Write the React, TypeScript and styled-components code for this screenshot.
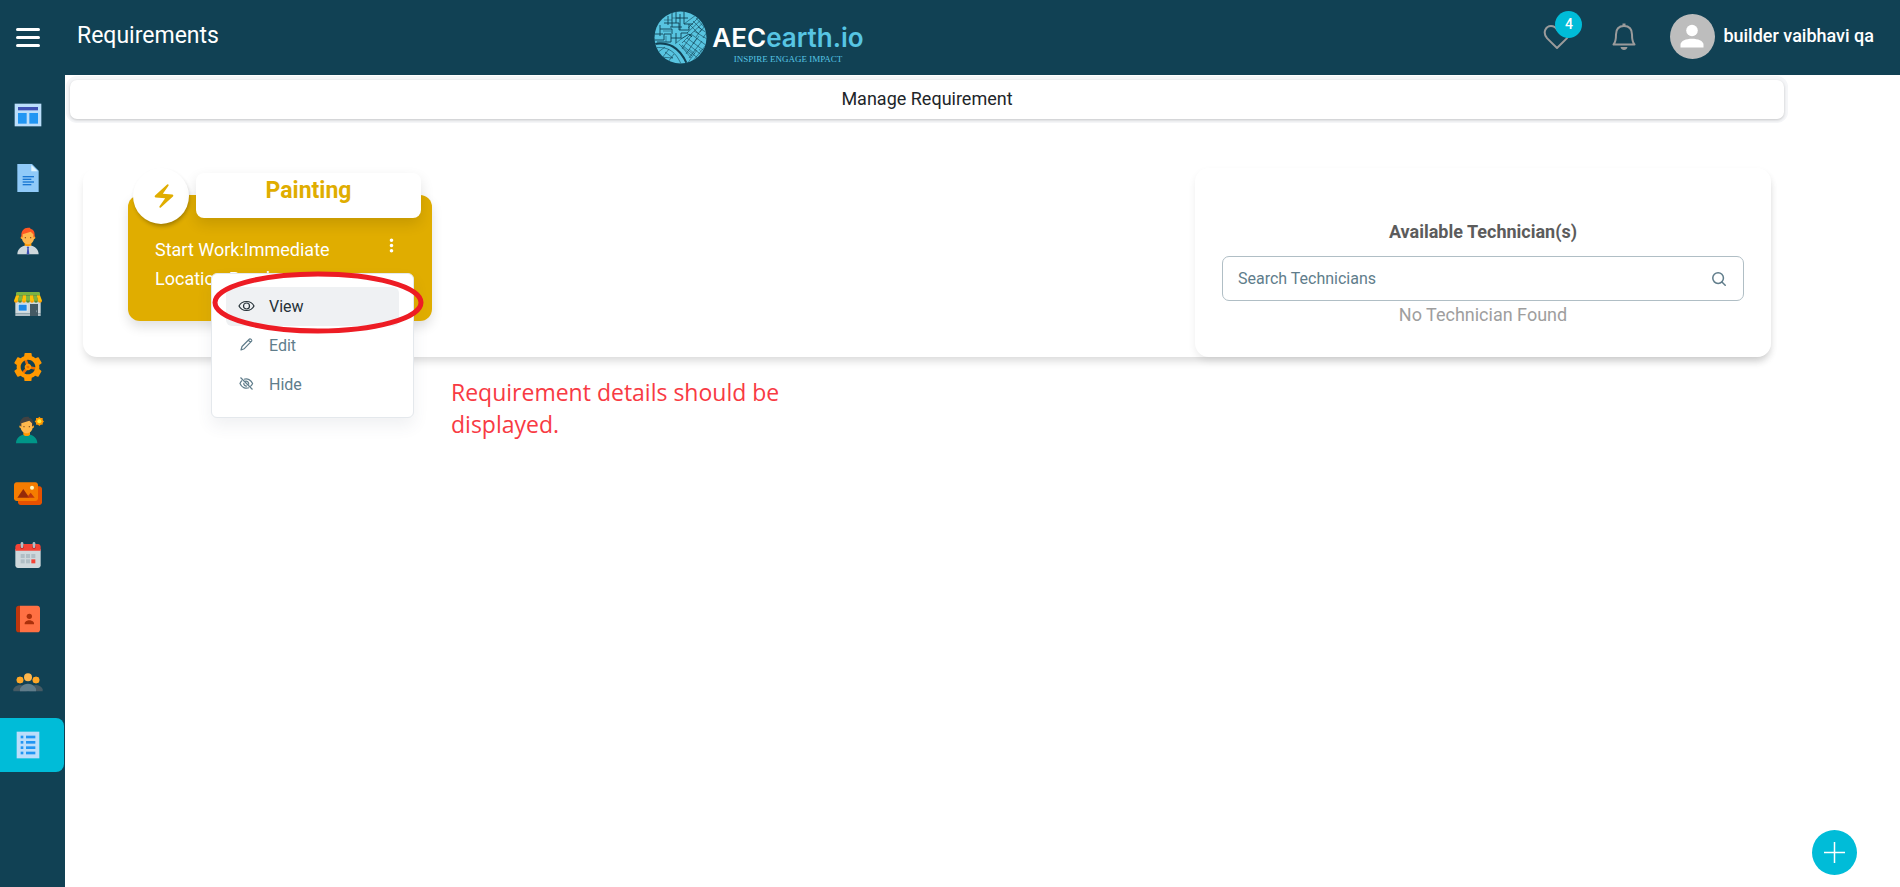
import React from 'react';
import styled, { createGlobalStyle } from 'styled-components';
import type { IconType } from 'react-icons';
import {
  FcTemplate, FcDocument, FcManager, FcShop, FcEngineering, FcPortraitMode,
  FcGallery, FcPlanner, FcContacts, FcConferenceCall, FcViewDetails,
} from 'react-icons/fc';
import { MdElectricBolt, MdMoreVert } from 'react-icons/md';

const navy = '#114154';
const teal = '#00bcd8';
const gold = '#e0ad00';
const slate = '#607d8b';

const GlobalStyle = createGlobalStyle`
  *, *::before, *::after { box-sizing: border-box; }
  body { margin: 0; background: #fff; color: #212529; font: 400 18px/24px Roboto, sans-serif; }
  button, input { font: inherit; color: inherit; }
  button { border: 0; padding: 0; background: none; cursor: pointer; }
  a { color: inherit; text-decoration: none; }
  h1, h2, h3, p, ul { margin: 0; padding: 0; }
  ul { list-style: none; }
`;

const Page = styled.div`
  min-height: 100vh;
  display: flex;
  flex-direction: column;
`;

const Header = styled.header`
  height: 75px;
  padding-bottom: 2px;
  background: ${navy};
  color: #fff;
  display: grid;
  grid-template-columns: 1fr auto 1fr;
  align-items: center;
`;

const HeaderStart = styled.div`
  display: flex;
  align-items: center;
  gap: 37px;
  padding: 0 0 2px 16px;
`;

const MenuButton = styled.button`
  display: flex;
  flex-direction: column;
  gap: 5px;
  padding: 3px 0 0;
`;

const MenuBar = styled.span`
  width: 24px;
  height: 3px;
  border-radius: 2px;
  background: #fff;
`;

const PageTitle = styled.h1`
  font-size: 23px;
  line-height: 32px;
  font-weight: 400;
`;

const Logo = styled.a`
  display: flex;
  align-items: center;
  gap: 5px;
  padding: 2px 382px 0 0;
`;

const LogoText = styled.span`
  display: flex;
  flex-direction: column;
  align-items: center;
  padding-top: 14px;
`;

const Wordmark = styled.span`
  font: 600 26px/28px Inter, sans-serif;
`;

const WordmarkAccent = styled.span`
  color: #57c5e4;
`;

const Tagline = styled.span`
  font: 400 9px/14px "Liberation Serif", serif;
  color: #57c5e4;
`;

const HeaderEnd = styled.div`
  display: flex;
  align-items: center;
  justify-content: flex-end;
  padding-right: 25px;
`;

const IconButton = styled.button<{ $gap: number }>`
  position: relative;
  display: flex;
  color: #9b9b9b;
  margin-right: ${(p) => p.$gap}px;
`;

const Badge = styled.span`
  position: absolute;
  left: 12px;
  top: -13px;
  width: 27px;
  height: 27px;
  border-radius: 50%;
  background: ${teal};
  color: #fff;
  font-size: 14px;
  line-height: 27px;
  font-weight: 500;
  text-align: center;
`;

const UserButton = styled.button`
  display: flex;
  align-items: center;
  gap: 8px;
  font-weight: 500;
`;

const UserName = styled.span`
  padding: 0 1px 2px 0;
`;

const Body = styled.div`
  flex: 1;
  display: flex;
`;

const Sidebar = styled.nav`
  width: 65px;
  flex: none;
  background: ${navy};
  padding: 13px 1px 0 0;
  display: flex;
  flex-direction: column;
  gap: 9px;
`;

const NavItem = styled.a<{ $active?: boolean }>`
  height: 54px;
  display: flex;
  align-items: center;
  padding-left: 12px;
  border-radius: 0 8px 8px 0;
  background: ${(p) => (p.$active ? teal : 'transparent')};
`;

const Main = styled.main`
  flex: 1;
  min-width: 0;
  padding: 5px 116px 0 5px;
`;

const Banner = styled.h2`
  height: 39px;
  border-radius: 7px;
  background: #fff;
  box-shadow: 0 1px 3px rgba(0, 0, 0, 0.2), 0 0 0 4px #f5f6f8;
  font-size: 18px;
  line-height: 38px;
  font-weight: 400;
  text-align: center;
`;

const Board = styled.section`
  margin: 49px 13px 0;
  height: 189px;
  display: flex;
  border-radius: 14px;
  background: #fff;
  box-shadow: 0 6px 8px -2px rgba(0, 0, 0, 0.15);
`;

const Requirements = styled.div`
  flex: 1;
  padding: 27px 45px 0;
`;

const Card = styled.article`
  position: relative;
  width: 304px;
  height: 126px;
  border-radius: 12px;
  background: ${gold};
  color: #fff;
  box-shadow: 0 6px 12px rgba(0, 0, 0, 0.12);
`;

const CardHead = styled.header`
  display: flex;
  align-items: center;
  gap: 7px;
  padding: 0 11px 0 5px;
  margin-bottom: 11px;
`;

const CardIcon = styled.span`
  width: 56px;
  height: 56px;
  margin-top: -27px;
  padding-left: 6px;
  display: flex;
  align-items: center;
  justify-content: center;
  border-radius: 50%;
  background: #fff;
  color: ${gold};
  box-shadow: 1px 3px 4px -1px rgba(0, 0, 0, 0.3);
`;

const CardTitle = styled.h3`
  flex: 1;
  height: 45px;
  margin-top: -28px;
  border-radius: 8px;
  background: #fff;
  color: ${gold};
  font-size: 23px;
  line-height: 35px;
  font-weight: 700;
  text-align: center;
  box-shadow: 0 6px 14px rgba(0, 0, 0, 0.12);
`;

const CardBody = styled.div`
  display: flex;
  justify-content: space-between;
  align-items: flex-start;
  padding: 0 30px 0 27px;
  line-height: 29px;
`;

const MoreButton = styled.button`
  display: flex;
  color: #fff;
`;

const Menu = styled.ul`
  position: absolute;
  z-index: 1;
  left: 83px;
  top: 78px;
  width: 203px;
  height: 145px;
  padding: 13px 14px;
  border: 1px solid #e4e8ec;
  border-radius: 6px;
  background: #fff;
  box-shadow: 0 8px 16px rgba(60, 80, 100, 0.08);
`;

const MenuItem = styled.button<{ $active?: boolean }>`
  width: 100%;
  height: 39px;
  padding-left: 12px;
  display: flex;
  align-items: center;
  gap: 14px;
  border-radius: 6px;
  font-size: 16px;
  color: ${(p) => (p.$active ? '#263238' : slate)};
  background: ${(p) => (p.$active ? '#eff1f3' : 'transparent')};
`;

const Highlight = styled.svg`
  position: absolute;
  z-index: 2;
  left: 84px;
  top: 76px;
  pointer-events: none;
`;

const Technicians = styled.aside`
  width: 576px;
  padding: 50px 27px 0;
  border-radius: 14px;
  background: #fff;
  text-align: center;
  box-shadow: 0 4px 8px -1px rgba(0, 0, 0, 0.09);
`;

const TechTitle = styled.h3`
  font-size: 18px;
  line-height: 28px;
  font-weight: 700;
  color: #5c5c5c;
  margin-bottom: 10px;
`;

const SearchBox = styled.label`
  height: 45px;
  padding: 0 16px 0 15px;
  display: flex;
  align-items: center;
  border: 1px solid #b0bec5;
  border-radius: 7px;
  color: ${slate};
`;

const SearchInput = styled.input`
  flex: 1;
  min-width: 0;
  border: 0;
  padding: 0;
  outline: 0;
  background: none;
  font-size: 16px;
  &::placeholder { color: ${slate}; opacity: 1; }
`;

const Empty = styled.p`
  line-height: 28px;
  color: #9e9e9e;
`;

const Note = styled.p`
  width: 360px;
  margin: 19px 0 0 381px;
  font: 400 23px/32px "Open Sans", sans-serif;
  color: #f83a43;
`;

const AddButton = styled.button`
  position: fixed;
  right: 43px;
  bottom: 12px;
  width: 45px;
  height: 45px;
  display: flex;
  align-items: center;
  justify-content: center;
  border-radius: 50%;
  background: ${teal};
`;

const navItems: { label: string; icon: IconType; active?: boolean }[] = [
  { label: 'Dashboard', icon: FcTemplate },
  { label: 'Documents', icon: FcDocument },
  { label: 'Manager', icon: FcManager },
  { label: 'Shop', icon: FcShop },
  { label: 'Services', icon: FcEngineering },
  { label: 'Profiles', icon: FcPortraitMode },
  { label: 'Gallery', icon: FcGallery },
  { label: 'Planner', icon: FcPlanner },
  { label: 'Contacts', icon: FcContacts },
  { label: 'Community', icon: FcConferenceCall },
  { label: 'Requirements', icon: FcViewDetails, active: true },
];

const LogoMark = () => (
  <svg width="53" height="53" viewBox="0 0 53 53" aria-hidden="true">
    <defs><clipPath id="globe"><circle cx="26.5" cy="26.5" r="26" /></clipPath></defs>
    <g clipPath="url(#globe)" fill="none" stroke={navy} strokeWidth="0.6">
      <rect width="53" height="53" fill="#58c4e0" stroke="none" />
      <path d="M0 33C14 31 25 35 33 53" strokeWidth="2" />
      <path d="M0 37C12 35 21 39 27 53M3 42l8-6M8 47l7-9M14 51l6-8M5 46l14 1M11 41l8 6" />
      <path d="M0 29h10v-6h7v8M17 27h10v-5h7M6 18h12v5M10 12h15v7h10v-6M0 23h9M22 0v12M18 2v14M26 3v16M14 5v9M30 0v13h9M6 14v11M27 28l8-5 3 3M22 7h12M16 16h12M3 31h14M22 22v10" strokeWidth="0.9" />
      <path d="M33 22L50 6M35 25l18-17M30 13l12-9M34 17l10-10M39 10l9 9M36 14l9 9M42 7l9 10M28 32l9-9 16 12M25 33l13 12M38 24l-10 14M43 27L32 43M48 30L35 47M53 33L38 51M33 27l20 15M30 30l20 16M28 34l18 15M40 20l13 8M44 16l9 6M46 21l5-6M42 26l5-7M49 27l4-6" />
      <path d="M33 53l10-14M27 35l10 12M21 33l6-5M45 38l6 8M18 7h8M10 9h8M9 20h8M12 25v6M39 33l6-8M35 38l6 5" strokeWidth="0.5" />
    </g>
  </svg>
);

const EyeIcon = () => (
  <svg width="17" height="18" viewBox="0 0 17 18" fill="none" stroke="currentColor" strokeWidth="1.2" aria-hidden="true">
    <path d="M1 8C4 2 13 2 16 8C13 14 4 14 1 8Z" /><circle cx="8.500" cy="8" r="3" />
  </svg>
);

const PencilIcon = () => (
  <svg width="17" height="18" viewBox="0 0 17 18" fill="none" stroke="currentColor" strokeWidth="1.2" strokeLinejoin="round" aria-hidden="true">
    <path d="M3 13L4 9.500L11.500 2C12.300 1.200 14.500 3.200 13.600 4.200L6.300 11.700ZM10.300 3.200L12.500 5.400" />
  </svg>
);

const EyeOffIcon = () => (
  <svg width="17" height="18" viewBox="0 0 17 18" fill="none" stroke="currentColor" strokeWidth="1.2" aria-hidden="true">
    <path d="M2.500 1.500L14.500 13.500M6 3.300C9.500 2 13 4 14.600 7.500C14.100 8.700 13.300 9.700 12.400 10.400M4 4.500C3 5.300 2.400 6.300 2 7.500C3.500 11.500 7.500 13 11 11.800M7 5.300C9 4.500 11 6 10.800 8.500M5.800 6.800C5.500 8.800 7 10.300 9 10" />
  </svg>
);

export default function App() {
  return (
    <Page>
      <GlobalStyle />
      <Header>
        <HeaderStart>
          <MenuButton aria-label="Toggle menu"><MenuBar /><MenuBar /><MenuBar /></MenuButton>
          <PageTitle>Requirements</PageTitle>
        </HeaderStart>
        <Logo href="#">
          <LogoMark />
          <LogoText>
            <Wordmark>AEC<WordmarkAccent>earth.io</WordmarkAccent></Wordmark>
            <Tagline>INSPIRE ENGAGE IMPACT</Tagline>
          </LogoText>
        </Logo>
        <HeaderEnd>
          <IconButton aria-label="Favourites" $gap={41}>
            <svg width="28" height="26" viewBox="0 0 28 26" fill="none" stroke="currentColor" strokeWidth="2" strokeLinejoin="round" aria-hidden="true">
              <path d="M14 24L4.200 14.400C-1 8.500 3 2 8 2C11 2 12.800 3.500 14 5.600C15.200 3.500 17 2 20 2C25 2 29 8.500 23.800 14.400Z" />
            </svg>
            <Badge>4</Badge>
          </IconButton>
          <IconButton aria-label="Notifications" $gap={34}>
            <svg width="24" height="28" viewBox="0 0 24 28" fill="none" stroke="currentColor" strokeWidth="2" aria-hidden="true">
              <path d="M1.500 21.500H22.500C20 19 20 16 20 11.500C20 6 17 3 12 3C7 3 4 6 4 11.500C4 16 4 19 1.500 21.500Z" strokeLinejoin="round" />
              <path d="M12 3V0.500" strokeWidth="3" />
              <path d="M8.500 24H15.500C15 28 9 28 8.500 24Z" fill="currentColor" stroke="none" />
            </svg>
          </IconButton>
          <UserButton>
            <svg width="45" height="45" viewBox="0 0 45 45" aria-hidden="true">
              <circle cx="22.500" cy="22.500" r="22.500" fill="#bdbdbd" />
              <circle cx="22" cy="16.500" r="5.800" fill="#fff" />
              <path d="M10.500 33.500V30.800C10.500 22.800 33.500 22.800 33.500 30.800V33.500Z" fill="#fff" />
            </svg>
            <UserName>builder vaibhavi qa</UserName>
          </UserButton>
        </HeaderEnd>
      </Header>
      <Body>
        <Sidebar>
          {navItems.map(({ label, icon: Icon, active }) => (
            <NavItem key={label} href="#" aria-label={label} $active={active}><Icon size={32} /></NavItem>
          ))}
        </Sidebar>
        <Main>
          <Banner>Manage Requirement</Banner>
          <Board>
            <Requirements>
              <Card>
                <CardHead>
                  <CardIcon><MdElectricBolt size={28} /></CardIcon>
                  <CardTitle>Painting</CardTitle>
                </CardHead>
                <CardBody>
                  <div>
                    <p>Start Work:Immediate</p>
                    <p>Location:Bandra</p>
                  </div>
                  <MoreButton aria-label="More options"><MdMoreVert size={21} /></MoreButton>
                </CardBody>
                <Menu>
                  <li><MenuItem $active><EyeIcon />View</MenuItem></li>
                  <li><MenuItem><PencilIcon />Edit</MenuItem></li>
                  <li><MenuItem><EyeOffIcon />Hide</MenuItem></li>
                </Menu>
                <Highlight width="212" height="63" viewBox="0 0 212 63" aria-hidden="true">
                  <ellipse cx="106" cy="31.500" rx="103" ry="28.500" fill="none" stroke="#ed1c24" strokeWidth="5" />
                </Highlight>
              </Card>
            </Requirements>
            <Technicians>
              <TechTitle>Available Technician(s)</TechTitle>
              <SearchBox>
                <SearchInput type="text" placeholder="Search Technicians" aria-label="Search Technicians" />
                <svg width="16" height="16" viewBox="0 0 18 18" fill="none" stroke="currentColor" strokeWidth="1.700" strokeLinecap="round" aria-hidden="true">
                  <circle cx="8" cy="8" r="6" /><path d="M12.300 12.300L16 16" />
                </svg>
              </SearchBox>
              <Empty>No Technician Found</Empty>
            </Technicians>
          </Board>
          <Note>Requirement details should be displayed.</Note>
        </Main>
      </Body>
      <AddButton aria-label="Add requirement">
        <svg width="21" height="21" viewBox="0 0 21 21" stroke="#fff" strokeWidth="1.500" aria-hidden="true">
          <path d="M10.500 0V21M0 10.500H21" />
        </svg>
      </AddButton>
    </Page>
  );
}
